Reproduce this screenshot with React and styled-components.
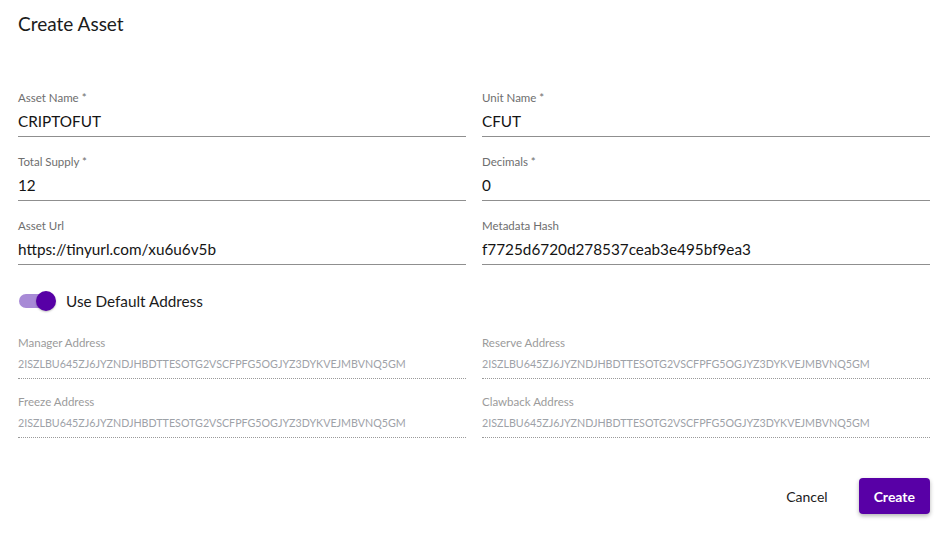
import styled, { createGlobalStyle } from 'styled-components';

const GlobalStyle = createGlobalStyle`
    body {
        margin: 0;
        background: #fff;
        font-family: Lato, "Liberation Sans", sans-serif;
        color: #1a1a1a;
    }
`
const Page = styled.div`
    width: 945px;
    height: 536px;
    box-sizing: border-box;
    padding: 12px 15px 0 18px;
    display: flex;
    flex-direction: column;
`
const Title = styled.h1`
    margin: 0;
    font-size: 19px;
    font-weight: 400;
    line-height: 24px;
    color: #1b1b1b;
`
const Grid = styled.div`
    display: grid;
    grid-template-columns: 1fr 1fr;
    column-gap: 16px;
    margin-top: ${p => p.$top}px;
`
const Field = styled.div`
    display: flex;
    flex-direction: column;
    border-bottom: 1px ${p => (p.$disabled ? 'dotted #9a9a9a' : 'solid #8f8f8f')};
    height: ${p => (p.$disabled ? 59 : 64)}px;
    box-sizing: border-box;
    justify-content: flex-end;
    padding-bottom: ${p => (p.$disabled ? 8 : 5)}px;
`
const Label = styled.label`
    font-size: 11.5px;
    line-height: 14px;
    color: ${p => (p.$disabled ? '#9b9b9b' : '#6e6e6e')};
    margin-bottom: ${p => (p.$disabled ? 8 : 6)}px;
`
const Value = styled.div`
    font-size: ${p => (p.$disabled ? '10.7px' : '15.3px')};
    line-height: ${p => (p.$disabled ? '12px' : '20px')};
    color: ${p => (p.$disabled ? '#9ea2a8' : '#141414')};
    white-space: nowrap;
    overflow: hidden;
`
const SwitchRow = styled.div`
    display: flex;
    align-items: center;
    gap: 13px;
    margin-top: 24px;
    height: 24px;
    font-size: 15.3px;
    color: #1b1b1b;
`
const Track = styled.span`
    position: relative;
    display: inline-block;
    width: 34px;
    height: 14px;
    border-radius: 7px;
    background: #a88ad6;
    margin-left: 1px;
`
const Thumb = styled.span`
    position: absolute;
    right: -3px;
    top: -3px;
    width: 20px;
    height: 20px;
    border-radius: 50%;
    background: #5700a6;
    box-shadow: 0 1px 2px rgba(0, 0, 0, 0.25);
`
const Actions = styled.div`
    display: flex;
    justify-content: flex-end;
    align-items: center;
    gap: 16px;
    margin-top: 40px;
`
const Button = styled.button`
    font-family: inherit;
    font-size: 14px;
    height: 36px;
    padding: 0 15px;
    border-radius: 4px;
    border: none;
    cursor: pointer;
    background: ${p => (p.$primary ? '#5800a6' : 'transparent')};
    color: ${p => (p.$primary ? '#fff' : '#1b1b1b')};
    font-weight: ${p => (p.$primary ? 700 : 400)};
    box-shadow: ${p => (p.$primary ? '0 2px 4px rgba(0,0,0,0.3)' : 'none')};
`

const fields = [
    ['Asset Name *', 'CRIPTOFUT'],
    ['Unit Name *', 'CFUT'],
    ['Total Supply *', '12'],
    ['Decimals *', '0'],
    ['Asset Url', 'https://tinyurl.com/xu6u6v5b'],
    ['Metadata Hash', 'f7725d6720d278537ceab3e495bf9ea3'],
]

const addr = '2ISZLBU645ZJ6JYZNDJHBDTTESOTG2VSCFPFG5OGJYZ3DYKVEJMBVNQ5GM'
const addresses = ['Manager Address', 'Reserve Address', 'Freeze Address', 'Clawback Address']

function App() {
    return (
        <Page>
            <GlobalStyle />
            <Title>Create Asset</Title>
            <Grid $top={37}>
                {fields.map(([label, value]) => (
                    <Field key={label}>
                        <Label>{label}</Label>
                        <Value>{value}</Value>
                    </Field>
                ))}
            </Grid>
            <SwitchRow>
                <Track><Thumb /></Track>
                <span>Use Default Address</span>
            </SwitchRow>
            <Grid $top={7}>
                {addresses.map(label => (
                    <Field key={label} $disabled>
                        <Label $disabled>{label}</Label>
                        <Value $disabled>{addr}</Value>
                    </Field>
                ))}
            </Grid>
            <Actions>
                <Button>Cancel</Button>
                <Button $primary>Create</Button>
            </Actions>
        </Page>
    )
}

export default App
